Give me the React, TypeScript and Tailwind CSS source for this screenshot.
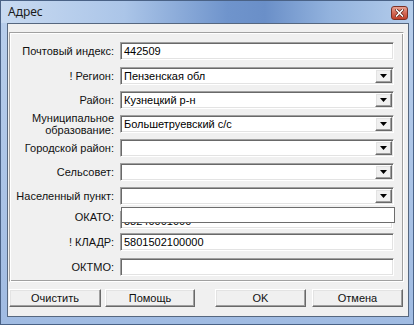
import React from 'react'

const font = { fontFamily: '"Liberation Sans", Arial, sans-serif' }

const sunken =
  'border border-t-[#a0a0a0] border-l-[#a0a0a0] border-b-white border-r-white shadow-[inset_1px_1px_0_#696969,inset_-1px_-1px_0_#e3e3e3] bg-white'

const raised =
  'border border-t-white border-l-white border-b-[#696969] border-r-[#696969] shadow-[inset_-1px_-1px_0_#a0a0a0,inset_1px_1px_0_#e3e3e3] bg-[#f0f0f0]'

const Label = ({ children }: { children: React.ReactNode }) => (
  <div className="w-[104px] shrink-0 text-right text-[11px] leading-[12px] text-[#111]">{children}</div>
)

const TextField = ({ value }: { value?: string }) => (
  <div className={`h-[18px] w-[274px] flex items-center pl-[3px] text-[11px] text-black ${sunken}`}>{value}</div>
)

const Combo = ({ value }: { value?: string }) => (
  <div className={`h-[18px] w-[274px] flex items-center pl-[3px] pr-px text-[11px] text-black ${sunken}`}>
    <span className="flex-1">{value}</span>
    <div className={`w-[17px] h-[14px] flex items-center justify-center ${raised}`}>
      <svg width="7" height="4" viewBox="0 0 7 4">
        <path d="M0 0h7L3.5 4z" fill="#000" />
      </svg>
    </div>
  </div>
)

const Row = ({ label, children, className }: { label: React.ReactNode; children: React.ReactNode; className?: string }) => (
  <div className={`flex items-center gap-[6px] h-[18px] ${className ?? ''}`}>
    <Label>{label}</Label>
    {children}
  </div>
)

const Button = ({ children, className }: { children: React.ReactNode; className?: string }) => (
  <div className={`h-[18px] flex items-center justify-center text-[11px] text-[#111] ${raised} ${className ?? ''}`}>
    {children}
  </div>
)

export default function App() {
  return (
    <div
      style={font}
      className="w-[414px] h-[325px] flex flex-col border border-[#4a6286] bg-[linear-gradient(to_bottom,#b9cfec,#a0bbe2)] overflow-hidden"
    >
      {/* title bar */}
      <div className="h-[22px] shrink-0 flex items-center pl-[7px] pr-[5px] bg-[linear-gradient(to_right,#c8daf1_0%,#abc5e8_30%,#6f94cc_55%,#6a8fc8_64%,#93b3de_80%,#b5cdeb_100%)]">
        <span className="text-[12px] text-[#1b1b1b] flex-1" style={{ fontFamily: '"Noto Sans", "Open Sans", sans-serif' }}>
          Адрес
        </span>
        <div className="w-[17px] h-[14px] mt-[1px] rounded-[3px] border border-[#7b3026] bg-[linear-gradient(to_bottom,#e8a293,#d46a57_50%,#c2412b)] flex items-center justify-center">
          <svg width="9" height="8" viewBox="0 0 9 8">
            <path d="M1.5 1l6 6M7.5 1l-6 6" stroke="#5a1c14" strokeWidth="3" strokeLinecap="square" />
            <path d="M1.5 1l6 6M7.5 1l-6 6" stroke="#fff" strokeWidth="1.6" strokeLinecap="square" />
          </svg>
        </div>
      </div>

      {/* client area */}
      <div className="flex-1 ml-[6px] mr-[4px] mb-[7px] border border-[#56677f] bg-[#f0f0f0] flex flex-col pl-px pr-[4px] pt-[8px]">
        <div className="h-[250px] border border-t-[#a0a0a0] border-l-[#a0a0a0] border-b-white border-r-white shadow-[inset_1px_1px_0_#fff,inset_-1px_-1px_0_#a0a0a0] pt-[9px] flex flex-col">
          <Row label="Почтовый индекс:">
            <TextField value="442509" />
          </Row>
          <Row label="! Регион:" className="mt-[7px]">
            <Combo value="Пензенская обл" />
          </Row>
          <Row label="Район:" className="mt-[6px]">
            <Combo value="Кузнецкий р-н" />
          </Row>
          <Row
            label={
              <>
                Муниципальное
                <br />
                образование:
              </>
            }
            className="mt-[6px]"
          >
            <Combo value="Большетруевский с/с" />
          </Row>
          <Row label="Городской район:" className="mt-[6px]">
            <Combo />
          </Row>
          <Row label="Сельсовет:" className="mt-[6px]">
            <Combo />
          </Row>
          <Row label="Населенный пункт:" className="mt-[6px]">
            <Combo />
          </Row>

          {/* OKATO: edit box lying over the field */}
          <div className="flex items-start gap-[6px] h-[22px] mt-[2px]">
            <div className="w-[104px] shrink-0 pt-[3px] text-right text-[11px] leading-[15px] text-[#111]">ОКАТО:</div>
            <div className="relative w-[274px] h-[22px]">
              <div className={`absolute left-0 top-[4px] h-[18px] w-[273px] flex items-end pl-[3px] pb-[1px] text-[11px] leading-[12px] text-black ${sunken}`}>
                58240001000
              </div>
              <div className="absolute left-px top-0 h-[16px] w-[274px] bg-white border border-[#6d6d6d]" />
            </div>
          </div>

          <Row label="! КЛАДР:" className="mt-[4px]">
            <TextField value="5801502100000" />
          </Row>
          <Row label="ОКТМО:" className="mt-[7px]">
            <TextField />
          </Row>
        </div>

        <div className="flex mt-[7px]">
          <Button className="w-[92px]">Очистить</Button>
          <Button className="w-[90px] ml-[4px]">Помощь</Button>
          <Button className="w-[91px] ml-[20px]">OK</Button>
          <Button className="w-[91px] ml-[6px]">Отмена</Button>
        </div>
      </div>
    </div>
  )
}
